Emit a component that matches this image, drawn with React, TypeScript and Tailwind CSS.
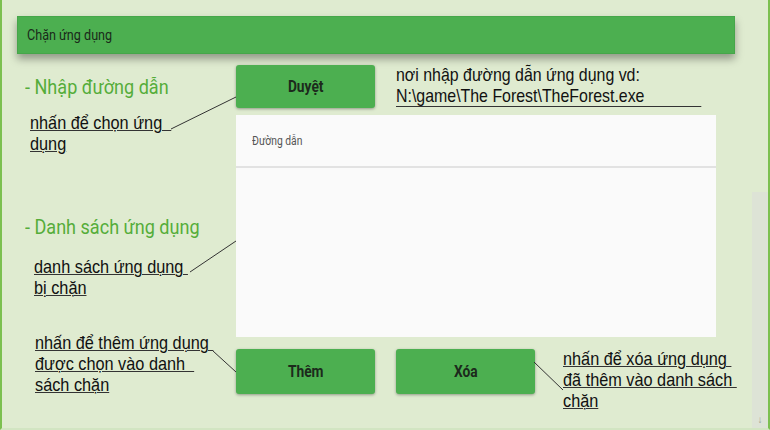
import React from 'react';

const roboto = { fontFamily: 'Roboto, "Noto Sans", sans-serif' };
const arial = { fontFamily: '"Liberation Sans", Arial, sans-serif' };

function Note({ lines, className = '' }: { lines: string[]; className?: string }) {
  return (
    <div
      className={`origin-left scale-x-[0.88] text-[18.5px] leading-[21px] text-[#111] whitespace-pre ${className}`}
      style={arial}
    >
      {lines.map((l) => (
        <div key={l}>
          <span className="underline decoration-[#333] decoration-1 underline-offset-[1px]">{l}</span>
        </div>
      ))}
    </div>
  );
}

function GreenButton({ label, tall = false }: { label: string; tall?: boolean }) {
  return (
    <button
      className={`w-[139px] ${tall ? 'h-[45px]' : 'h-[43px]'} shrink-0 rounded-[3px] bg-[#4caf50] shadow-[0_1px_3px_rgba(0,0,0,0.35)] flex items-center justify-center`}
    >
      <span className="scale-x-[0.86] text-[16px] font-bold text-[#1c2a1c]" style={roboto}>
        {label}
      </span>
    </button>
  );
}

export default function App() {
  return (
    <div className="relative w-[770px] h-[430px] overflow-hidden bg-[#dfebd0] border-l-2 border-r-2 border-b-2 border-l-[#7cc050] border-r-[#7cc050] border-b-[#d2e5c2]">
      {/* header */}
      <div className="ml-[15px] mt-[16px] w-[718px] h-[38px] bg-[#4caf50] border border-[#46a64a] shadow-[0_5px_8px_rgba(0,0,0,0.35)] flex items-center pl-[9px]">
        <span className="origin-left scale-x-[0.9] text-[14px] text-[#1a2a1a]" style={roboto}>
          Chặn ứng dụng
        </span>
      </div>

      <div className="flex mt-[11px]">
        {/* left column */}
        <div className="w-[234px] shrink-0 flex flex-col">
          <div
            className="ml-[23px] mt-[10px] origin-left scale-x-[0.86] text-[21px] leading-[24px] text-[#55ad3a] whitespace-nowrap"
            style={roboto}
          >
            - Nhập đường dẫn
          </div>
          <Note className="ml-[28px] mt-[13px]" lines={['nhấn để chọn ứng  ', 'dụng']} />
          <div
            className="ml-[23px] mt-[61px] origin-left scale-x-[0.86] text-[21px] leading-[24px] text-[#55ad3a] whitespace-nowrap"
            style={roboto}
          >
            - Danh sách ứng dụng
          </div>
          <Note className="ml-[32px] mt-[17px]" lines={['danh sách ứng dụng ', 'bị chặn']} />
          <Note
            className="ml-[33px] mt-[34px]"
            lines={['nhấn để thêm ứng dụng ', 'được chọn vào danh  ', 'sách chặn']}
          />
        </div>

        {/* right column */}
        <div className="flex flex-col">
          <div className="flex">
            <GreenButton label="Duyệt" />
            <div
              className="ml-[21px] -mt-[1px] origin-left scale-x-[0.86] text-[18.5px] leading-[21px] text-[#111] whitespace-nowrap"
              style={arial}
            >
              <div>nơi nhập đường dẫn ứng dụng vd:</div>
              <div className="w-[355px] border-b border-[#333]">N:\game\The Forest\TheForest.exe</div>
            </div>
          </div>

          <div className="mt-[7px] w-[480px] h-[222px] bg-[#fafafa]">
            <div className="h-[53px] border-b-2 border-[#e2e2e2] flex items-center pl-[16px]">
              <span className="origin-left scale-x-[0.86] text-[12px] text-[#555]" style={roboto}>
                Đường dẫn
              </span>
            </div>
          </div>

          <div className="flex mt-[12px] gap-[21px]">
            <GreenButton label="Thêm" tall />
            <GreenButton label="Xóa" tall />
            <Note
              className="ml-[7px] -mt-[1px]"
              lines={['nhấn để xóa ứng dụng ', 'đã thêm vào danh sách ', 'chặn']}
            />
          </div>
        </div>
      </div>

      {/* pointer lines */}
      <svg className="absolute -left-[2px] top-0 w-[770px] h-[430px] pointer-events-none" viewBox="0 0 770 430">
        <g stroke="#333" strokeWidth="1">
          <line x1="171" y1="129" x2="236" y2="97" />
          <line x1="190" y1="272" x2="236" y2="241" />
          <line x1="213" y1="351" x2="236" y2="372" />
          <line x1="534" y1="362" x2="563" y2="390" />
        </g>
      </svg>

      {/* scrollbar */}
      <div className="absolute right-0 top-[192px] bottom-0 w-[16px] bg-[#dde3d6] flex items-end justify-center pb-[2px]">
        <span className="text-[10px] leading-[12px] text-[#9aa294]" style={arial}>↓</span>
      </div>
    </div>
  );
}
